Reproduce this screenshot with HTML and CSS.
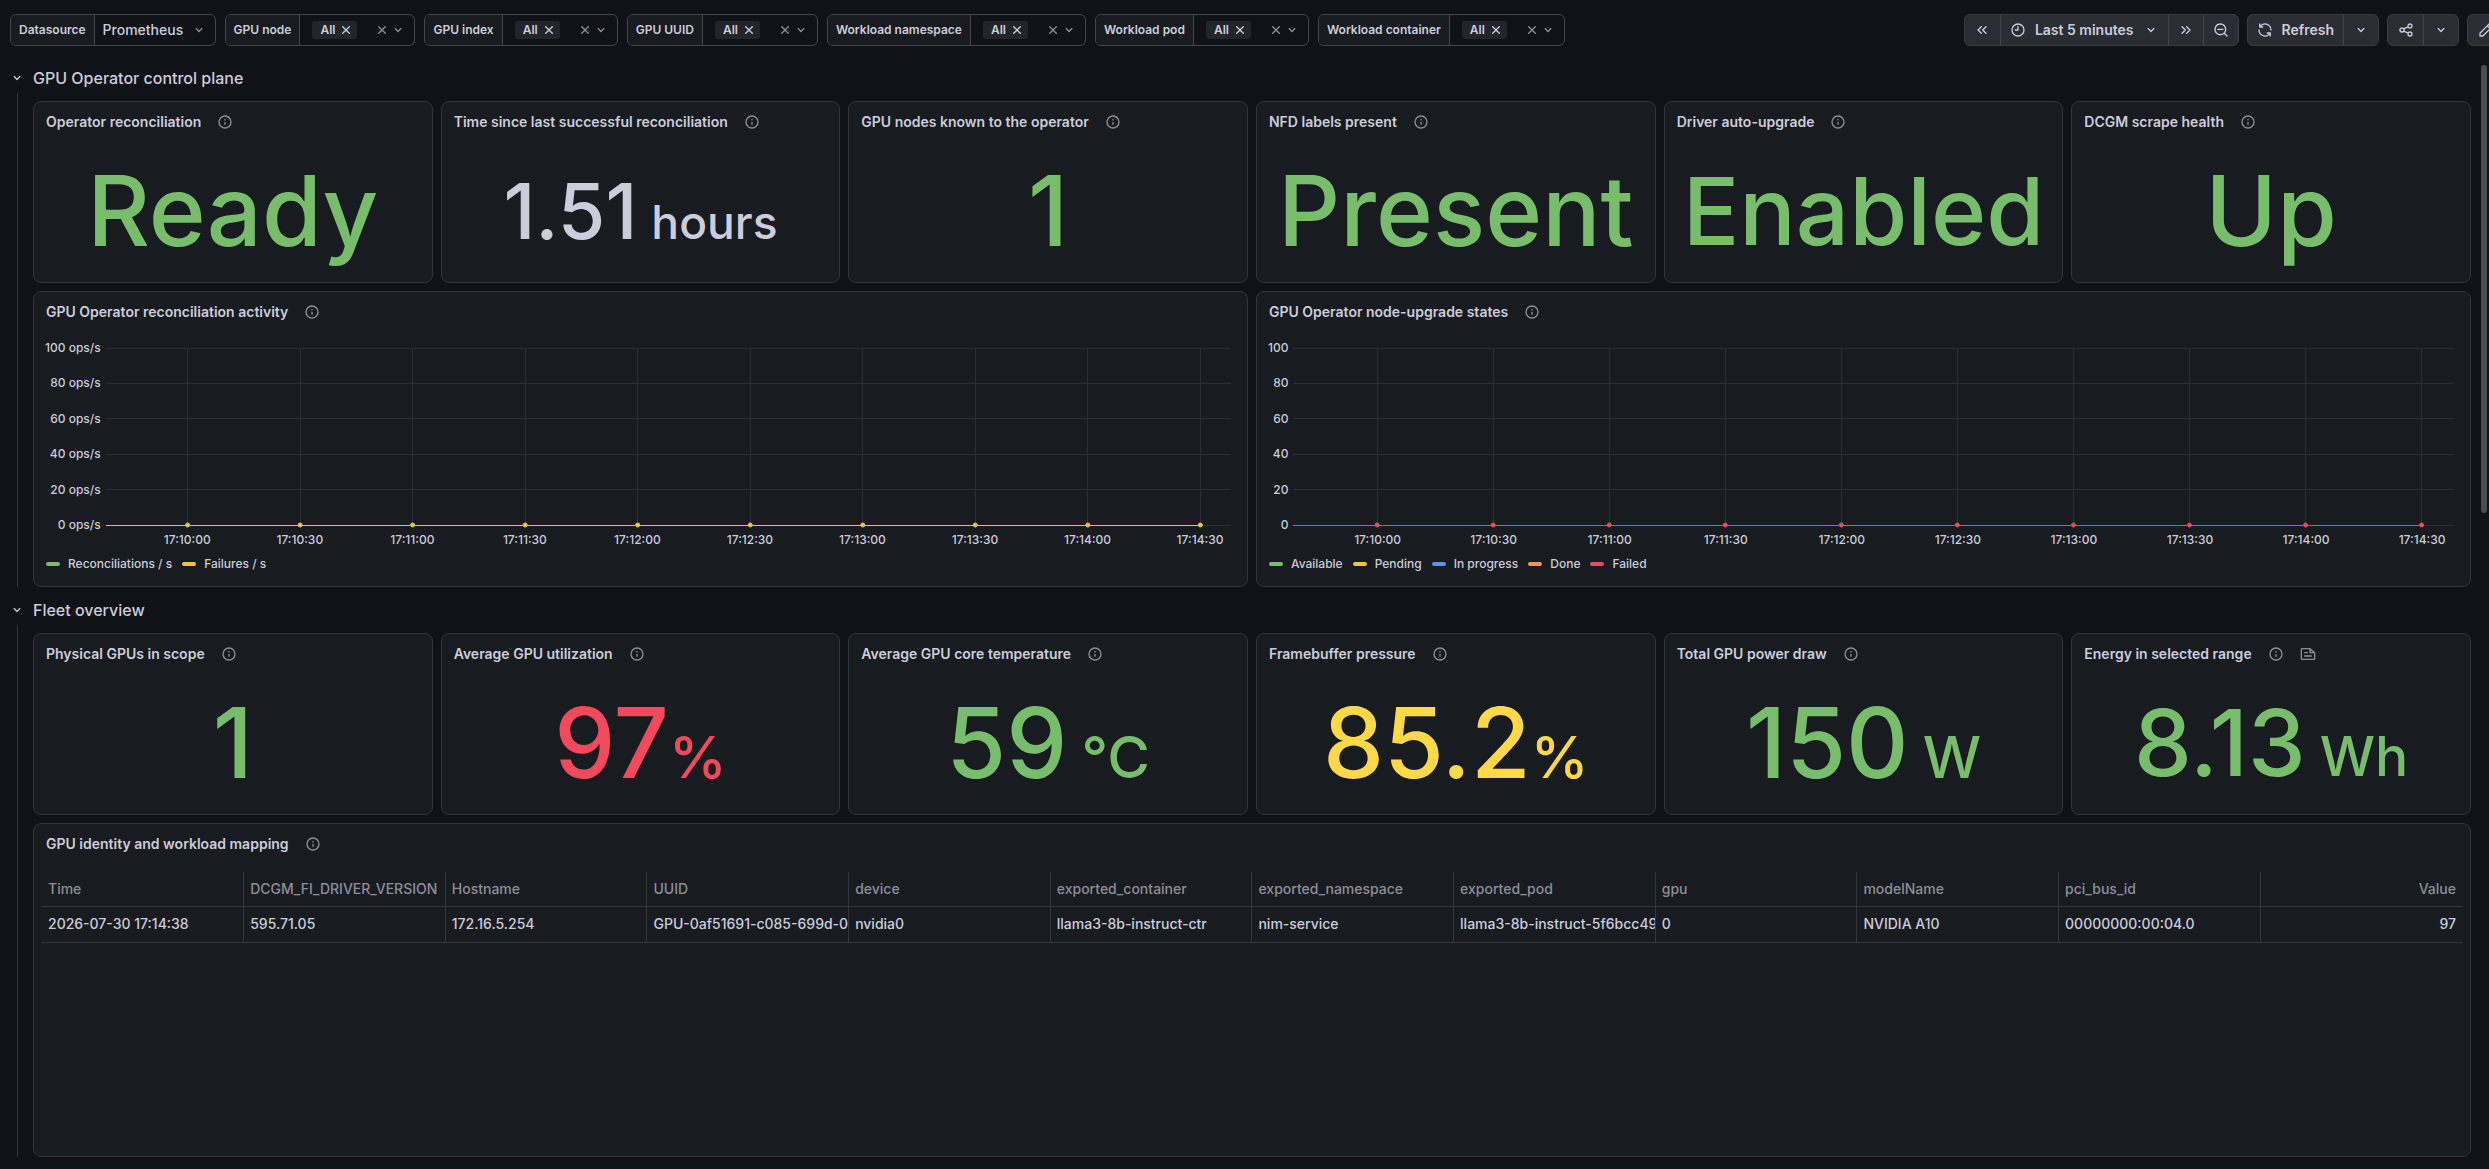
FILE: index.html
```
<!DOCTYPE html>
<html lang="en">
  <head>
    <meta charset="UTF-8" />
    <meta name="viewport" content="width=device-width, initial-scale=1.0" />
    <title>GPU Operator dashboard</title>
    <link rel="stylesheet" href="styles.css" />
  </head>
  <body>
    <!-- shared icons -->
    <svg class="sprite" aria-hidden="true">
      <symbol id="angle-down" viewBox="0 0 24 24"><path d="M17,9.17a1,1,0,0,0-1.41,0L12,12.71,8.46,9.17a1,1,0,0,0-1.41,0,1,1,0,0,0,0,1.42l4.24,4.24a1,1,0,0,0,1.42,0L17,10.59A1,1,0,0,0,17,9.17Z" /></symbol>
      <symbol id="times" viewBox="0 0 24 24"><path d="M13.41,12l4.3-4.29a1,1,0,1,0-1.42-1.42L12,10.59,7.71,6.29A1,1,0,0,0,6.29,7.71L10.59,12l-4.3,4.29a1,1,0,0,0,0,1.42,1,1,0,0,0,1.42,0L12,13.41l4.29,4.3a1,1,0,0,0,1.42,0,1,1,0,0,0,0-1.42Z" /></symbol>
      <symbol id="info" viewBox="0 0 24 24"><path d="M12,2A10,10,0,1,0,22,12,10,10,0,0,0,12,2Zm0,18a8,8,0,1,1,8-8A8,8,0,0,1,12,20Zm0-8.5a1,1,0,0,0-1,1v3a1,1,0,0,0,2,0v-3A1,1,0,0,0,12,11.5Zm0-4a1.25,1.25,0,1,0,1.25,1.25A1.25,1.25,0,0,0,12,7.5Z" /></symbol>
      <symbol id="clock" viewBox="0 0 24 24"><path d="M12,2A10,10,0,1,0,22,12,10,10,0,0,0,12,2Zm0,18a8,8,0,1,1,8-8A8,8,0,0,1,12,20ZM12,6a1,1,0,0,0-1,1v4H8a1,1,0,0,0,0,2h4a1,1,0,0,0,1-1V7A1,1,0,0,0,12,6Z" /></symbol>
      <symbol id="share" viewBox="0 0 24 24"><path d="M18,14a4,4,0,0,0-3.08,1.48l-5.1-2.35a3.64,3.64,0,0,0,0-2.26l5.1-2.35A4,4,0,1,0,14,6a4.17,4.17,0,0,0,.07.71L8.79,9.14a4,4,0,1,0,0,5.72l5.28,2.43A4.17,4.17,0,0,0,14,18a4,4,0,1,0,4-4ZM18,4a2,2,0,1,1-2,2A2,2,0,0,1,18,4ZM6,14a2,2,0,1,1,2-2A2,2,0,0,1,6,14Zm12,6a2,2,0,1,1,2-2A2,2,0,0,1,18,20Z" /></symbol>
      <symbol id="search-minus" viewBox="0 0 24 24"><path d="M21.71,20.29,18,16.61A9,9,0,1,0,16.61,18l3.68,3.68a1,1,0,0,0,1.42,0A1,1,0,0,0,21.71,20.29ZM11,18a7,7,0,1,1,7-7A7,7,0,0,1,11,18Zm4-8H7a1,1,0,0,0,0,2h8a1,1,0,0,0,0-2Z" /></symbol>
      <symbol id="sync" viewBox="0 0 24 24"><path d="M19.91,15.51H15.38a1,1,0,0,0,0,2h2.4A8,8,0,0,1,4,12a1,1,0,1,0-2,0,10,10,0,0,0,16.88,7.23V21a1,1,0,0,0,2,0V16.5A1,1,0,0,0,19.91,15.51ZM12,2A10,10,0,0,0,5.12,4.77V3a1,1,0,0,0-2,0V7.5a1,1,0,0,0,1,1h4.5a1,1,0,0,0,0-2H6.22A8,8,0,0,1,20,12a1,1,0,0,0,2,0A10,10,0,0,0,12,2Z" /></symbol>
      <symbol id="pen" viewBox="0 0 24 24"><path d="M22,7.24a1,1,0,0,0-.29-.71L17.47,2.29A1,1,0,0,0,16.76,2a1,1,0,0,0-.71.29L13.22,5.12h0L2.29,16.05a1,1,0,0,0-.29.71V21a1,1,0,0,0,1,1H7.24A1,1,0,0,0,8,21.71L18.87,10.78h0L21.71,8a1.19,1.19,0,0,0,.22-.33,1,1,0,0,0,0-.24.7.7,0,0,0,0-.14ZM6.83,20H4V17.17l9.93-9.93,2.83,2.83ZM18.17,8.66,15.34,5.83l1.42-1.41,2.82,2.82Z" /></symbol>
      <symbol id="double-left" viewBox="0 0 24 24"><path class="stroke" d="M11 7l-5 5 5 5M18 7l-5 5 5 5" /></symbol>
      <symbol id="double-right" viewBox="0 0 24 24"><path class="stroke" d="M6 7l5 5-5 5M13 7l5 5-5 5" /></symbol>
      <symbol id="note" viewBox="0 0 24 24"><path class="stroke" d="M4 4h11l7 6v9a1 1 0 0 1-1 1H3a1 1 0 0 1-1-1V5a1 1 0 0 1 1-1zM15 4v6h7M7 10h4M7 15h10" /></symbol>
      <symbol id="grid">
        <line x1="0" x2="100%" y1="0" y2="0" />
        <line x1="0" x2="100%" y1="20%" y2="20%" />
        <line x1="0" x2="100%" y1="40%" y2="40%" />
        <line x1="0" x2="100%" y1="60%" y2="60%" />
        <line x1="0" x2="100%" y1="80%" y2="80%" />
        <line x1="0" x2="100%" y1="100%" y2="100%" />
        <line x1="7.25%" x2="7.25%" y1="0" y2="100%" />
        <line x1="17.25%" x2="17.25%" y1="0" y2="100%" />
        <line x1="27.25%" x2="27.25%" y1="0" y2="100%" />
        <line x1="37.25%" x2="37.25%" y1="0" y2="100%" />
        <line x1="47.25%" x2="47.25%" y1="0" y2="100%" />
        <line x1="57.25%" x2="57.25%" y1="0" y2="100%" />
        <line x1="67.25%" x2="67.25%" y1="0" y2="100%" />
        <line x1="77.25%" x2="77.25%" y1="0" y2="100%" />
        <line x1="87.25%" x2="87.25%" y1="0" y2="100%" />
        <line x1="97.25%" x2="97.25%" y1="0" y2="100%" />
      </symbol>
      <!-- flat series sitting on zero -->
      <symbol id="zero-series">
        <line x1="0" x2="97.25%" y1="100%" y2="100%" />
        <circle cx="7.25%" cy="100%" r="2" />
        <circle cx="17.25%" cy="100%" r="2" />
        <circle cx="27.25%" cy="100%" r="2" />
        <circle cx="37.25%" cy="100%" r="2" />
        <circle cx="47.25%" cy="100%" r="2" />
        <circle cx="57.25%" cy="100%" r="2" />
        <circle cx="67.25%" cy="100%" r="2" />
        <circle cx="77.25%" cy="100%" r="2" />
        <circle cx="87.25%" cy="100%" r="2" />
        <circle cx="97.25%" cy="100%" r="2" />
      </symbol>
    </svg>

    <header class="topbar">
      <div class="variables">
        <div class="variable">
          <label for="datasource">Datasource</label>
          <div class="picker">
            <select id="datasource">
              <option>Prometheus</option>
            </select>
            <svg class="icon"><use href="#angle-down" /></svg>
          </div>
        </div>
        <div class="variable">
          <label for="gpu-node">GPU node</label>
          <div class="multi">
            <button class="chip" id="gpu-node">All <svg class="icon"><use href="#times" /></svg></button>
            <button class="clear" aria-label="Clear"><svg class="icon"><use href="#times" /></svg></button>
            <button class="open" aria-label="Open"><svg class="icon"><use href="#angle-down" /></svg></button>
          </div>
        </div>
        <div class="variable">
          <label for="gpu-index">GPU index</label>
          <div class="multi">
            <button class="chip" id="gpu-index">All <svg class="icon"><use href="#times" /></svg></button>
            <button class="clear" aria-label="Clear"><svg class="icon"><use href="#times" /></svg></button>
            <button class="open" aria-label="Open"><svg class="icon"><use href="#angle-down" /></svg></button>
          </div>
        </div>
        <div class="variable">
          <label for="gpu-uuid">GPU UUID</label>
          <div class="multi">
            <button class="chip" id="gpu-uuid">All <svg class="icon"><use href="#times" /></svg></button>
            <button class="clear" aria-label="Clear"><svg class="icon"><use href="#times" /></svg></button>
            <button class="open" aria-label="Open"><svg class="icon"><use href="#angle-down" /></svg></button>
          </div>
        </div>
        <div class="variable">
          <label for="namespace">Workload namespace</label>
          <div class="multi">
            <button class="chip" id="namespace">All <svg class="icon"><use href="#times" /></svg></button>
            <button class="clear" aria-label="Clear"><svg class="icon"><use href="#times" /></svg></button>
            <button class="open" aria-label="Open"><svg class="icon"><use href="#angle-down" /></svg></button>
          </div>
        </div>
        <div class="variable">
          <label for="pod">Workload pod</label>
          <div class="multi">
            <button class="chip" id="pod">All <svg class="icon"><use href="#times" /></svg></button>
            <button class="clear" aria-label="Clear"><svg class="icon"><use href="#times" /></svg></button>
            <button class="open" aria-label="Open"><svg class="icon"><use href="#angle-down" /></svg></button>
          </div>
        </div>
        <div class="variable">
          <label for="container">Workload container</label>
          <div class="multi">
            <button class="chip" id="container">All <svg class="icon"><use href="#times" /></svg></button>
            <button class="clear" aria-label="Clear"><svg class="icon"><use href="#times" /></svg></button>
            <button class="open" aria-label="Open"><svg class="icon"><use href="#angle-down" /></svg></button>
          </div>
        </div>
      </div>

      <div class="toolbar">
        <div class="button-group">
          <button aria-label="Move time range backwards"><svg class="icon"><use href="#double-left" /></svg></button>
          <button class="labelled">
            <svg class="icon"><use href="#clock" /></svg>
            <span>Last 5 minutes</span>
            <svg class="icon"><use href="#angle-down" /></svg>
          </button>
          <button aria-label="Move time range forwards"><svg class="icon"><use href="#double-right" /></svg></button>
          <button aria-label="Zoom out"><svg class="icon"><use href="#search-minus" /></svg></button>
        </div>
        <div class="button-group">
          <button class="labelled"><svg class="icon"><use href="#sync" /></svg><span>Refresh</span></button>
          <button aria-label="Refresh interval"><svg class="icon"><use href="#angle-down" /></svg></button>
        </div>
        <div class="button-group">
          <button aria-label="Share"><svg class="icon"><use href="#share" /></svg></button>
          <button aria-label="Share options"><svg class="icon"><use href="#angle-down" /></svg></button>
        </div>
        <div class="button-group">
          <button aria-label="Edit"><svg class="icon"><use href="#pen" /></svg></button>
        </div>
      </div>
    </header>

    <main>
      <section>
        <h2><button class="row-toggle"><svg class="icon"><use href="#angle-down" /></svg>GPU Operator control plane</button></h2>
        <div class="row">
          <article class="panel">
            <h3>Operator reconciliation <svg class="icon"><use href="#info" /></svg></h3>
            <p class="stat green">Ready</p>
          </article>
          <article class="panel">
            <h3>Time since last successful reconciliation <svg class="icon"><use href="#info" /></svg></h3>
            <p class="stat small">1.51<span class="unit spaced">hours</span></p>
          </article>
          <article class="panel">
            <h3>GPU nodes known to the operator <svg class="icon"><use href="#info" /></svg></h3>
            <p class="stat green">1</p>
          </article>
          <article class="panel">
            <h3>NFD labels present <svg class="icon"><use href="#info" /></svg></h3>
            <p class="stat green">Present</p>
          </article>
          <article class="panel">
            <h3>Driver auto-upgrade <svg class="icon"><use href="#info" /></svg></h3>
            <p class="stat large green">Enabled</p>
          </article>
          <article class="panel">
            <h3>DCGM scrape health <svg class="icon"><use href="#info" /></svg></h3>
            <p class="stat green">Up</p>
          </article>

          <article class="panel wide">
            <h3>GPU Operator reconciliation activity <svg class="icon"><use href="#info" /></svg></h3>
            <div class="chart">
              <div class="y-axis">
                <span>100 ops/s</span><span>80 ops/s</span><span>60 ops/s</span><span>40 ops/s</span><span>20 ops/s</span><span>0 ops/s</span>
              </div>
              <svg class="plot">
                <use class="grid" href="#grid" />
                <use class="series yellow" href="#zero-series" />
              </svg>
              <div class="x-axis">
                <span>17:10:00</span><span>17:10:30</span><span>17:11:00</span><span>17:11:30</span><span>17:12:00</span>
                <span>17:12:30</span><span>17:13:00</span><span>17:13:30</span><span>17:14:00</span><span>17:14:30</span>
              </div>
            </div>
            <ul class="legend">
              <li class="green">Reconciliations / s</li>
              <li class="yellow">Failures / s</li>
            </ul>
          </article>
          <article class="panel wide">
            <h3>GPU Operator node-upgrade states <svg class="icon"><use href="#info" /></svg></h3>
            <div class="chart">
              <div class="y-axis">
                <span>100</span><span>80</span><span>60</span><span>40</span><span>20</span><span>0</span>
              </div>
              <svg class="plot">
                <use class="grid" href="#grid" />
                <use class="series red" href="#zero-series" />
              </svg>
              <div class="x-axis">
                <span>17:10:00</span><span>17:10:30</span><span>17:11:00</span><span>17:11:30</span><span>17:12:00</span>
                <span>17:12:30</span><span>17:13:00</span><span>17:13:30</span><span>17:14:00</span><span>17:14:30</span>
              </div>
            </div>
            <ul class="legend">
              <li class="green">Available</li>
              <li class="yellow">Pending</li>
              <li class="blue">In progress</li>
              <li class="orange">Done</li>
              <li class="red">Failed</li>
            </ul>
          </article>
        </div>
      </section>

      <section>
        <h2><button class="row-toggle"><svg class="icon"><use href="#angle-down" /></svg>Fleet overview</button></h2>
        <div class="row">
          <article class="panel">
            <h3>Physical GPUs in scope <svg class="icon"><use href="#info" /></svg></h3>
            <p class="stat green">1</p>
          </article>
          <article class="panel">
            <h3>Average GPU utilization <svg class="icon"><use href="#info" /></svg></h3>
            <p class="stat red">97<span class="unit">%</span></p>
          </article>
          <article class="panel">
            <h3>Average GPU core temperature <svg class="icon"><use href="#info" /></svg></h3>
            <p class="stat green">59<span class="unit spaced">°C</span></p>
          </article>
          <article class="panel">
            <h3>Framebuffer pressure <svg class="icon"><use href="#info" /></svg></h3>
            <p class="stat bright-yellow">85.2<span class="unit">%</span></p>
          </article>
          <article class="panel">
            <h3>Total GPU power draw <svg class="icon"><use href="#info" /></svg></h3>
            <p class="stat green">150<span class="unit spaced">W</span></p>
          </article>
          <article class="panel">
            <h3>Energy in selected range <svg class="icon"><use href="#info" /></svg> <svg class="icon"><use href="#note" /></svg></h3>
            <p class="stat medium green">8.13<span class="unit spaced">Wh</span></p>
          </article>

          <article class="panel full">
            <h3>GPU identity and workload mapping <svg class="icon"><use href="#info" /></svg></h3>
            <table>
              <thead>
                <tr>
                  <th>Time</th>
                  <th>DCGM_FI_DRIVER_VERSION</th>
                  <th>Hostname</th>
                  <th>UUID</th>
                  <th>device</th>
                  <th>exported_container</th>
                  <th>exported_namespace</th>
                  <th>exported_pod</th>
                  <th>gpu</th>
                  <th>modelName</th>
                  <th>pci_bus_id</th>
                  <th>Value</th>
                </tr>
              </thead>
              <tbody>
                <tr>
                  <td>2026-07-30 17:14:38</td>
                  <td>595.71.05</td>
                  <td>172.16.5.254</td>
                  <td>GPU-0af51691-c085-699d-0</td>
                  <td>nvidia0</td>
                  <td>llama3-8b-instruct-ctr</td>
                  <td>nim-service</td>
                  <td>llama3-8b-instruct-5f6bcc49</td>
                  <td>0</td>
                  <td>NVIDIA A10</td>
                  <td>00000000:00:04.0</td>
                  <td>97</td>
                </tr>
              </tbody>
            </table>
          </article>
        </div>
      </section>
    </main>
    <div class="scrollbar"></div>
  </body>
</html>
```
FILE: styles.css
```
* {
  box-sizing: border-box;
}
body {
  margin: 0;
  min-height: 100vh;
  overflow: hidden;
  position: relative;
  background-color: #111217;
  color: #ccccdc;
  font-family: Inter, "Liberation Sans", sans-serif;
  font-size: 14px;
  font-weight: 500;
  line-height: 22px;
}
h2,
h3,
p,
ul {
  margin: 0;
  padding: 0;
  font-weight: 500;
}
button,
select {
  margin: 0;
  padding: 0;
  border: none;
  background: none;
  color: inherit;
  font: inherit;
}
.sprite {
  display: none;
}
.icon {
  width: 16px;
  height: 16px;
  flex: none;
  fill: currentColor;
}
.stroke {
  fill: none;
  stroke: currentColor;
  stroke-width: 2;
  stroke-linecap: round;
  stroke-linejoin: round;
}

/* top bar */
.topbar {
  display: flex;
  justify-content: space-between;
  padding: 14px 0 17px 10px;
}
.variables,
.toolbar {
  display: flex;
  gap: 9px;
}
.variable {
  display: flex;
  height: 32px;
  border: 1px solid #46474d;
  border-radius: 6px;
  overflow: hidden;
}
.variable label {
  display: flex;
  align-items: center;
  padding: 0 8px;
  background-color: #181b1f;
  border-right: 1px solid #46474d;
  font-size: 12px;
  font-weight: 600;
  white-space: nowrap;
}
.picker,
.multi {
  display: flex;
  align-items: center;
}
.picker {
  padding: 0 8px;
}
.picker select {
  appearance: none;
  width: 88px;
}
.picker .icon,
.clear,
.open {
  color: #8e8e99;
}
.multi {
  padding: 0 8px 0 12px;
}
.multi button {
  display: flex;
  align-items: center;
}
.multi .chip {
  height: 18px;
  padding: 0 3px 0 8px;
  gap: 3px;
  border-radius: 3px;
  background-color: #22252b;
  font-size: 12px;
  font-weight: 600;
}
.multi .clear {
  margin-left: 17px;
}
.toolbar {
  gap: 8px;
  margin-right: -15px;
}
.button-group {
  display: flex;
  height: 32px;
  border: 1px solid #3a3c43;
  border-radius: 6px;
  background-color: #2b2d34;
  overflow: hidden;
}
.button-group button {
  display: flex;
  align-items: center;
  justify-content: center;
  min-width: 35px;
  font-weight: 600;
  white-space: nowrap;
}
.button-group button + button {
  border-left: 1px solid #43454c;
}
.button-group .labelled {
  gap: 9px;
  padding: 0 9px;
}

/* rows */
main {
  padding: 0 18px 12px 9px;
}
.row-toggle {
  display: flex;
  align-items: center;
  gap: 8px;
  height: 30px;
  font-size: 16px;
}
.row {
  display: grid;
  grid-template-columns: repeat(6, minmax(0, 1fr));
  gap: 8px;
  margin-left: 8px;
  margin-bottom: 8px;
  padding: 8px 0 0 15px;
  border-left: 1px solid #34363c;
}
.panel {
  display: flex;
  flex-direction: column;
  min-height: 182px;
  background-color: #181b1f;
  border: 1px solid #34363c;
  border-radius: 8px;
}
.panel.wide {
  grid-column: span 3;
  min-height: 296px;
}
.panel.full {
  grid-column: span 6;
  min-height: 334px;
}
.panel h3 {
  display: flex;
  align-items: center;
  gap: 16px;
  height: 40px;
  padding: 0 12px;
  font-size: 14px;
  font-weight: 600;
  white-space: nowrap;
}
.panel h3 .icon {
  color: #8e8e99;
}

/* big numbers */
.stat {
  flex: 1;
  display: flex;
  align-items: baseline;
  justify-content: center;
  padding-top: 11px;
  font-size: 97px;
  line-height: 116px;
  white-space: nowrap;
}
.stat.large {
  font-size: 94px;
}
.stat.medium {
  font-size: 92px;
}
.stat.small {
  font-size: 77px;
}
.unit {
  font-size: 60%;
  line-height: 1;
}
.spaced {
  margin-left: 14px;
}
.green {
  color: #77bd6c;
}
.yellow {
  color: #f2c53a;
}
.bright-yellow {
  color: #fdd94a;
}
.red {
  color: #f2495c;
}

/* charts */
.chart {
  display: grid;
  grid-template-columns: auto minmax(0, 1fr);
  column-gap: 5px;
  padding: 16px 16px 0 11px;
  font-size: 12px;
  line-height: 12px;
}
.y-axis {
  display: flex;
  flex-direction: column;
  justify-content: space-between;
  margin: -6px 0;
  text-align: right;
}
.plot {
  width: 100%;
  height: 177px;
}
.plot,
.plot use,
symbol {
  overflow: visible;
}
symbol line {
  shape-rendering: crispEdges;
}
.grid {
  stroke: #2b2e33;
}
.series {
  stroke: currentColor;
  fill: currentColor;
}
.x-axis {
  grid-column: 2;
  display: grid;
  grid-template-columns: repeat(10, 1fr);
  margin: 9px -2.25% 0 2.25%;
  text-align: center;
}
.legend {
  display: flex;
  gap: 10px;
  padding: 8px 12px;
  list-style: none;
  font-size: 12px;
  line-height: 20px;
}
.legend li {
  display: flex;
  align-items: center;
  gap: 8px;
  color: #ccccdc;
}
.legend li::before {
  content: "";
  width: 14px;
  height: 4px;
  border-radius: 2px;
  background-color: #77bd6c;
}
.legend .yellow::before {
  background-color: #f2c53a;
}
.legend .blue::before {
  background-color: #5794f2;
}
.legend .orange::before {
  background-color: #f9934e;
}
.legend .red::before {
  background-color: #f2495c;
}

/* table */
table {
  width: calc(100% - 16px);
  margin: 8px 8px 0;
  table-layout: fixed;
  border-collapse: collapse;
}
th,
td {
  height: 36px;
  padding: 0 0 0 6px;
  border-bottom: 1px solid #34373c;
  border-right: 1px solid #34373c;
  text-align: left;
  font-weight: 500;
  white-space: nowrap;
  overflow: hidden;
}
th {
  height: 34px;
  color: #8e8e99;
}
th:last-child,
td:last-child {
  padding-right: 6px;
  border-right: none;
  text-align: right;
}

.scrollbar {
  position: absolute;
  top: 65px;
  right: 2px;
  width: 6px;
  height: 448px;
  border-radius: 3px;
  background-color: #4b4c52;
}
```
